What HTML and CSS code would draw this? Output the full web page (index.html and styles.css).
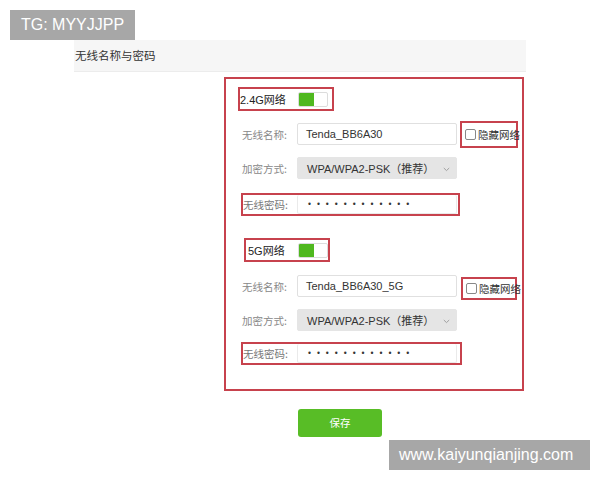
FILE: index.html
```html
<!DOCTYPE html>
<html lang="zh">
<head>
<meta charset="utf-8">
<title>无线名称与密码</title>
<link rel="stylesheet" href="styles.css">
</head>
<body>
<div class="page">
  <div class="badge tg">TG: MYYJJPP</div>
  <div class="panel">
    <div class="head">无线名称与密码</div>
    <div class="box">
      <div class="title hl t24"><span class="ttext">2.4G网络</span><span class="toggle"><i></i></span></div>
      <div class="row r1">
        <span class="label">无线名称:</span>
        <span class="input">Tenda_BB6A30</span>
        <span class="hide hl"><span class="cb"></span>隐藏网络</span>
      </div>
      <div class="row r2">
        <span class="label">加密方式:</span>
        <span class="input select">WPA/WPA2-PSK（推荐）<svg class="chev" width="7" height="5" viewBox="0 0 7 5"><path d="M0.8 1 L3.5 3.6 L6.2 1" fill="none" stroke="#999" stroke-width="0.9"/></svg></span>
      </div>
      <div class="row pw hl r3">
        <span class="label">无线密码:</span>
        <span class="input dots">• • • • • • • • • • • •</span>
      </div>

      <div class="title hl t5"><span class="ttext">5G网络</span><span class="toggle"><i></i></span></div>
      <div class="row r4">
        <span class="label">无线名称:</span>
        <span class="input">Tenda_BB6A30_5G</span>
        <span class="hide hl"><span class="cb"></span>隐藏网络</span>
      </div>
      <div class="row r5">
        <span class="label">加密方式:</span>
        <span class="input select">WPA/WPA2-PSK（推荐）<svg class="chev" width="7" height="5" viewBox="0 0 7 5"><path d="M0.8 1 L3.5 3.6 L6.2 1" fill="none" stroke="#999" stroke-width="0.9"/></svg></span>
      </div>
      <div class="row pw hl r6">
        <span class="label">无线密码:</span>
        <span class="input dots">• • • • • • • • • • • •</span>
      </div>
    </div>
    <div class="save">保存</div>
  </div>
  <div class="badge wm">www.kaiyunqianjing.com</div>
</div>
</body>
</html>
```

FILE: styles.css
```css
* { box-sizing: border-box; }
html, body { margin: 0; padding: 0; background: #fff; }
body {
  font-family: "Liberation Sans", "Noto Sans CJK SC", sans-serif;
  font-size: 11px;
  color: #333;
}
.page { position: relative; width: 600px; height: 480px; overflow: hidden; }

.badge {
  position: absolute;
  background: #a7a7a7;
  color: #fff;
  font-family: "Liberation Sans", Arial, sans-serif;
  font-size: 16px;
  line-height: 30px;
  white-space: nowrap;
}
.tg { left: 10px; top: 10px; width: 125px; height: 30px; padding-left: 11px; }
.wm { left: 389px; top: 440px; width: 201px; height: 30px; padding-left: 10px; }

.panel { margin-left: 74px; padding-top: 40px; width: 452px; }
.head {
  height: 32px;
  background: #f6f6f6;
  border-bottom: 1px solid #ececec;
  padding-left: 1px;
  font-family: "Noto Sans CJK SC", sans-serif;
  font-size: 11.5px;
  line-height: 31px;
  color: #333;
}

.box {
  margin-top: 5px;
  margin-left: 150px;
  width: 300px;
  height: 314px;
  border: 2px solid #c7424d;
  display: flex;
  flex-direction: column;
  align-items: flex-start;
}
.hl { border: 2px solid #c7424d; }

.title {
  display: flex;
  align-items: center;
  height: 24px;
  font-family: "Liberation Sans", "Noto Sans CJK SC", sans-serif;
  font-size: 11px;
  color: #222;
  white-space: nowrap;
}
.ttext { flex-shrink: 0; white-space: nowrap; }
.t24 { margin-top: 8px; margin-left: 12px; width: 96px; padding-left: 0; }
.t24 .ttext { width: 58px; }
.t5 { margin-top: 22px; margin-left: 18px; width: 86px; padding-left: 2px; }
.t5 .ttext { width: 50px; }

.toggle {
  display: inline-flex;
  width: 30px;
  height: 15px;
  border: 1px solid #dcdcdc;
  border-radius: 2px;
  background: #fff;
  overflow: hidden;
  flex-shrink: 0;
}
.toggle i { display: block; width: 15px; height: 100%; background: #4fb81f; }

.row {
  display: flex;
  align-items: center;
  height: 22px;
  margin-left: 16px;
}
.r1 { margin-top: 12px; }
.r2 { margin-top: 12px; }
.r4 { margin-top: 13px; }
.r5 { margin-top: 12px; }

.label {
  width: 55px;
  font-family: "Noto Sans CJK SC", sans-serif;
  font-size: 10.5px;
  color: #888;
  flex-shrink: 0;
  white-space: nowrap;
}
.input {
  display: flex;
  align-items: center;
  width: 160px;
  height: 22px;
  border: 1px solid #e0e0e0;
  border-radius: 2px;
  background: #fff;
  padding-left: 8px;
  font-family: "Liberation Sans", "Noto Sans CJK SC", sans-serif;
  font-size: 11px;
  color: #333;
  white-space: nowrap;
  flex-shrink: 0;
}
.select {
  background: #e5e5e5;
  border-color: #e5e5e5;
  padding-left: 9px;
  position: relative;
}
.chev { position: absolute; right: 6px; top: 9px; }

.hide {
  display: flex;
  align-items: center;
  width: 58px;
  height: 27px;
  margin-left: 3px;
  padding-left: 3px;
  font-family: "Noto Sans CJK SC", sans-serif;
  font-size: 10.5px;
  color: #333;
  white-space: nowrap;
  flex-shrink: 0;
}
.r4 .hide { width: 56px; height: 23px; margin-left: 4px; margin-top: 4px; }
.cb {
  width: 11px;
  height: 11px;
  border: 1px solid #888;
  border-radius: 2px;
  margin-right: 2px;
  background: #fff;
  flex-shrink: 0;
}

.pw {
  height: 23px;
  margin-left: 15px;
  width: 219px;
  padding-left: 0;
}
.pw .input { height: 19px; border-color: #eaeaea; border-top: none; }
.pw .label { width: 54px; color: #777; }
.r3 { margin-top: 14px; }
.r6 { margin-top: 11px; width: 221px; }
.dots {
  font-size: 8.5px;
  color: #333;
  letter-spacing: 1.8px;
  padding-left: 10px;
}

.save {
  margin-top: 18px;
  margin-left: 224px;
  width: 84px;
  height: 28px;
  background: #58bd26;
  border-radius: 3px;
  color: #fff;
  font-family: "Noto Sans CJK SC", sans-serif;
  font-size: 10.5px;
  line-height: 28px;
  text-align: center;
}
```
